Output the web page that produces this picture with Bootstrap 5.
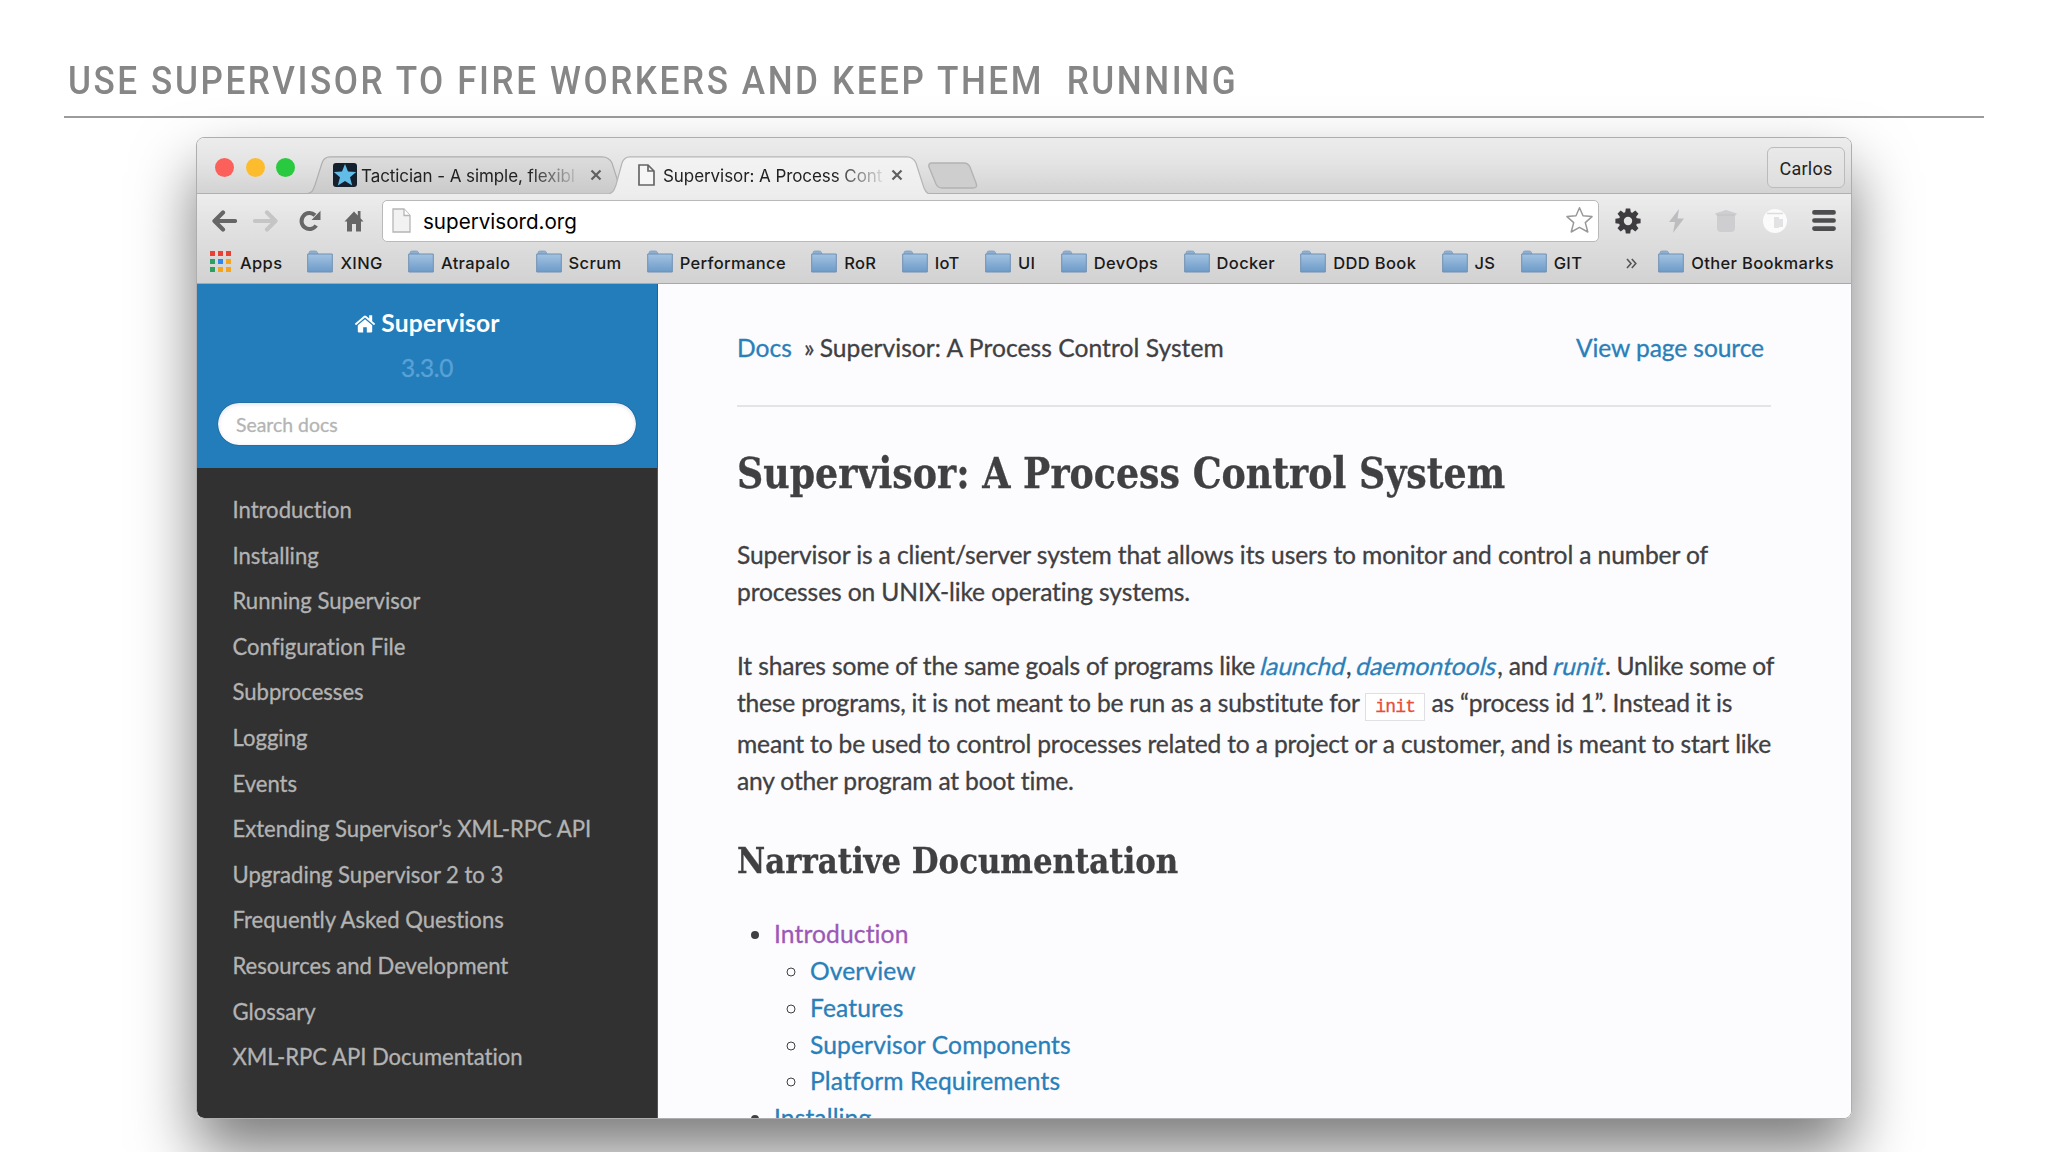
<!DOCTYPE html>
<html lang="en">
<head>
<meta charset="utf-8">
<title>Use Supervisor to fire workers</title>
<link href="https://cdn.jsdelivr.net/npm/bootstrap@5.3.0/dist/css/bootstrap.min.css" rel="stylesheet">
<script src="https://cdn.jsdelivr.net/npm/bootstrap@5.3.0/dist/js/bootstrap.bundle.min.js"></script>
<style>
  body { height: 1152px; background: #fff; }
  .slide { height: 1152px; padding: 58px 64px 0; }
  .slide-title { font: 500 39px/46px Roboto, sans-serif; color: #868686; letter-spacing: 2.86px; white-space: pre; padding-left: 4px; transform: scaleX(.9); transform-origin: 4px 0; height: 58px; }
  .slide-rule { height: 2px; background: #9b9c9c; }
  .browser { width: 1656px; height: 982px; margin: 19px 0 0 132px; border: 1px solid #aeaeae; border-radius: 8px; box-shadow: 0 33px 62px rgba(0,0,0,.52); font-family: Inter, sans-serif; }
  .tabstrip { height: 56px; background: linear-gradient(#ececec, #e4e4e4 45%, #d4d3d4); border-bottom: 1px solid #b1b0b1; padding-left: 18px; }
  .lights { gap: 11.5px; padding-top: 20px; }
  .light { width: 19px; height: 19px; border-radius: 50%; }
  .tab-item { height: 38px; margin-top: 18px; color: #222; font-size: 17px; letter-spacing: -.07px; position: relative; }
  .tab-shape { position: absolute; inset: 0; width: 100%; height: 100%; }
  .tab-back { width: 318px; margin-left: 13px; padding-left: 25px; }
  .tab-front { width: 320px; margin-left: -17px; padding-left: 29px; z-index: 1; }
  .tab-label { width: 215px; padding-top: 3px; white-space: nowrap; overflow: hidden; position: relative; -webkit-mask-image: linear-gradient(90deg, #000 78%, rgba(0,0,0,.12)); mask-image: linear-gradient(90deg, #000 78%, rgba(0,0,0,.12)); }
  .tab-item svg { flex: none; }
  .new-tab { margin: 24px 0 0 -1px; }
  .profile { width: 78px; height: 41px; margin: 9px 6px 0 0; padding-top: 3px; border: 1.5px solid #bbb; border-radius: 6px; font: 400 18px/1 Roboto, sans-serif; color: #222; letter-spacing: .24px; background: linear-gradient(#e9e9e9, #dedede); }
  .chrome-bars { height: 90px; background: linear-gradient(#ededed, #e3e2e3 35%, #d2d2d2); border-bottom: 1.5px solid #a9a8a9; }
  .toolbar { height: 53px; padding: 6px 15px 6px 14px; }
  .url-box { height: 42px; width: 1217px; background: #fff; border: 1.5px solid #bab9ba; border-radius: 5px; font-size: 20.6px; color: #000; padding: 3px 4px 0 9px; }
  .bookmarks { height: 32px; padding: 0 17px 0 13px; font-weight: 500; font-size: 16.5px; letter-spacing: .35px; color: #1a1a1a; white-space: nowrap; }
  .bm { gap: 7px; }
  .bm svg { margin-top: -3px; }
  .bm-list { width: 1275px; margin-left: 27px; }
  .page-area { height: 834px; font-family: Lato, sans-serif; border-radius: 0 0 7px 7px; -webkit-text-stroke: .3px; }
  .side { width: 461px; background: #313131; border-right: 1px solid #555; }
  .side-head { height: 184px; background: #237dba; padding: 19px 20px 0; }
  .side-name { font-size: 24.6px; line-height: 40px; font-weight: 700; letter-spacing: .15px; gap: 5px; -webkit-text-stroke: 0; }
  .side-version { font-size: 24.4px; line-height: 37px; color: #59a1d6; letter-spacing: -.4px; margin-top: 6px; }
  .side-search { height: 44px; margin-top: 16px; font-size: 19.4px; border: 1px solid #2571a4; border-radius: 22px; padding: 0 18px; box-shadow: inset 0 1px 4px #dde; }
  .side-search::placeholder { color: #b4b4b4; }
  .side-menu { padding: 19px 0 0 35.5px; font-size: 22.1px; line-height: 45.6px; font-variant-ligatures: none; letter-spacing: -.02px; color: #b3b3b3; }
  .doc { min-width: 0; background: #fcfbfe; padding: 46px 80px 0 79px; font-size: 24.6px; line-height: 36.9px; color: #404042; letter-spacing: -.12px; }
  .doc a { color: #2980b9; text-decoration: none; }
  .doc a.seen { color: #9b59b6; }
  .crumbs { letter-spacing: .05px; padding-right: 7px; }
  .crumb-sep { margin: 0 5px 0 12px; }
  .doc-rule { height: 2px; background: #e3e4e7; margin: 38px 0 45px; }
  .doc h1, .doc h2 { font-family: "DejaVu Serif Condensed", "DejaVu Serif", serif; font-stretch: condensed; font-weight: 700; letter-spacing: 0; white-space: nowrap; transform-origin: 0 0; }
  .doc h1 { font-size: 42px; line-height: 43px; margin: 0 0 42px; transform: scaleX(.962); }
  .doc h2 { font-size: 36px; line-height: 37px; margin: 42px 0 37px; transform: scaleX(.952); }
  .doc p { margin: 0 0 36.9px; white-space: nowrap; }
  .doc p.goals { letter-spacing: -.166px; }
  .goals em { display: inline-block; font-style: normal; transform: skewX(-14deg); letter-spacing: 0; }
  .goals-first { letter-spacing: -.22px; }
  .tight { letter-spacing: -.22px; }
  .init-code { display: inline-block; font: 400 18px/26px "Liberation Mono", monospace; letter-spacing: -.8px; color: #e74c3c; background: #fff; border: 1px solid #dfe0e4; padding: 0 9px; margin-bottom: 5.5px; }
  .doc ul { padding-left: 37px; margin: 0; letter-spacing: .12px; }
  .doc ul ul { padding-left: 36px; }
</style>
</head>
<body class="overflow-hidden">
<svg width="0" height="0" class="position-absolute">
  <defs>
    <linearGradient id="fold" x1="0" y1="0" x2="0" y2="1"><stop offset="0" stop-color="#a3c3e2"/><stop offset="1" stop-color="#6d9ac8"/></linearGradient>
    <linearGradient id="tabBack" x1="0" y1="0" x2="0" y2="1"><stop offset="0" stop-color="#dcdcdc"/><stop offset="1" stop-color="#cbcacb"/></linearGradient>
    <linearGradient id="tabFront" x1="0" y1="0" x2="0" y2="1"><stop offset="0" stop-color="#f3f3f3"/><stop offset="1" stop-color="#ededed"/></linearGradient>
    <symbol id="folder" viewBox="0 0 26 23"><path d="M2 4.5V3Q2 1 4 1H8.5Q10 1 10.5 2.5L11 4.5Z" fill="#8fb0d2" stroke="#7f9fc0" stroke-width=".8"/><path d="M.7 4H25.3V22H.7Z" fill="url(#fold)" stroke="#7090b3" stroke-width="1"/></symbol>
    <symbol id="cross" viewBox="0 0 12 12"><path d="M1.5 1.5L10.5 10.5M10.5 1.5L1.5 10.5" stroke="#606060" stroke-width="2.2"/></symbol>
  </defs>
</svg>
<main class="slide">
  <div class="slide-title">USE SUPERVISOR TO FIRE WORKERS AND KEEP THEM  RUNNING</div>
  <div class="slide-rule"></div>

  <section class="browser d-flex flex-column overflow-hidden">
    <div class="tabstrip d-flex align-items-start flex-shrink-0">
      <div class="lights d-flex">
        <span class="light" style="background:#fc605b"></span>
        <span class="light" style="background:#fdbc2e"></span>
        <span class="light" style="background:#29c940"></span>
      </div>
      <div class="tab-item tab-back d-flex align-items-center">
        <svg class="tab-shape" viewBox="0 0 318 38" preserveAspectRatio="none"><path d="M0 37.5C5 36 5 34 7 29L14 7Q16 .8 22 .8H294Q301 .8 304 7L311 29Q313 36 318 37.5" fill="url(#tabBack)" stroke="#afafaf" stroke-width="1.2"/></svg>
        <svg class="position-relative" width="24" height="24" viewBox="0 0 24 24"><rect width="24" height="24" rx="3" fill="#15202f"/><path d="M12 1L15 8.6L23.2 9L17 14.3L19.2 22.5L12 18L4.8 22.5L7 14.3L.8 9L9 8.6Z" fill="#62bce8"/></svg>
        <div class="tab-label ms-1">Tactician - A simple, flexibl</div>
        <svg class="position-relative" style="margin-left:14px" width="12" height="12"><use href="#cross"/></svg>
      </div>
      <div class="tab-item tab-front d-flex align-items-center">
        <svg class="tab-shape" viewBox="0 0 320 38" preserveAspectRatio="none"><path d="M0 38C5 36 5 34 7 29L13 7Q15 .8 21 .8H298Q304 .8 307 7L314 29Q316 36 320 38" fill="url(#tabFront)" stroke="#b5b5b5" stroke-width="1.2"/></svg>
        <svg class="position-relative" width="17" height="22" viewBox="0 0 17 22"><path d="M1 1H10L16 7V21H1ZM10 1V7H16" fill="#f6f6f6" stroke="#666" stroke-width="1.7"/></svg>
        <div class="tab-label ms-2" style="width:219px">Supervisor: A Process Cont</div>
        <svg class="position-relative" style="margin-left:9px" width="12" height="12"><use href="#cross"/></svg>
      </div>
      <svg class="new-tab" width="50" height="27" viewBox="0 0 50 27"><path d="M4 1H36Q40 1 42 5L48 21Q50 26 45 26H14Q10 26 8 22L1 5Q0 1 4 1Z" fill="#cfcecf" stroke="#b3b3b3" stroke-width="1.4"/></svg>
      <div class="profile ms-auto d-flex align-items-center justify-content-center">Carlos</div>
    </div>

    <div class="chrome-bars flex-shrink-0">
      <div class="toolbar d-flex align-items-center">
        <svg width="26" height="22" viewBox="0 0 26 22"><path d="M24 11H5M12 2.5L3.5 11L12 19.5" fill="none" stroke="#666" stroke-width="4.2" stroke-linecap="round" stroke-linejoin="round"/></svg>
        <svg class="ms-3" width="26" height="22" viewBox="0 0 26 22"><path d="M2 11H21M14 2.5L22.5 11L14 19.5" fill="none" stroke="#c6c5c6" stroke-width="4.2" stroke-linecap="round" stroke-linejoin="round"/></svg>
        <svg style="margin-left:20px" width="23" height="22" viewBox="0 0 23 22"><path d="M17.2 15.5A8 8 0 1 1 16 5.2" fill="none" stroke="#666" stroke-width="4"/><path d="M21.5 .8V10H12.5Z" fill="#666"/></svg>
        <svg style="margin-left:21px" width="22" height="22" viewBox="0 0 22 22"><path d="M11 1.5L1.5 11.5H4V21.5H9V14H13V21.5H18V11.5H20.5L17.5 8.3V1H14.8V5.5Z" fill="#666"/></svg>
        <div class="url-box d-flex align-items-center" style="margin-left:17px">
          <svg class="mb-1" width="20" height="25" viewBox="0 0 20 25"><path d="M1 1H12L18 7.5V24H1Z" fill="#f2f2f2" stroke="#b5b5b5" stroke-width="1.3"/><path d="M12 1V7.5H18" fill="#fff" stroke="#b5b5b5" stroke-width="1.3"/></svg>
          <span style="margin-left:11px">supervisord.org</span>
          <svg class="ms-auto mb-1" width="29" height="28" viewBox="0 0 29 28"><path d="M14.5 1.8L18 9.8L27 10.6L20.3 16.6L22.8 26L14.5 21.3L6.2 26L8.7 16.6L2 10.6L11 9.8Z" fill="#fff" stroke="#999" stroke-width="1.5" stroke-linejoin="round"/></svg>
        </div>
        <svg class="ms-3" width="26" height="26" viewBox="-13 -13 26 26"><g fill="#3e3c3f"><path id="cog" d="M-2.2 -12.6H2.2L3.2 -6H-3.2Z"/><use href="#cog" transform="rotate(45)"/><use href="#cog" transform="rotate(90)"/><use href="#cog" transform="rotate(135)"/><use href="#cog" transform="rotate(180)"/><use href="#cog" transform="rotate(225)"/><use href="#cog" transform="rotate(270)"/><use href="#cog" transform="rotate(315)"/></g><circle r="6.7" fill="none" stroke="#3e3c3f" stroke-width="5"/></svg>
        <svg style="margin-left:27px" width="17" height="24" viewBox="0 0 17 24"><path d="M11 0L1 13H7L5 24L16 9.5H9.5Z" fill="#bdbcbe"/></svg>
        <svg style="margin-left:29px" width="24" height="26" viewBox="0 0 24 26"><path d="M12 2L23 5.5L21 8V20Q21 24 17 24H7Q3 24 3 20V8L1 5.5Z" fill="#cecdcf"/><path d="M3 7H21" stroke="#c6c5c7" stroke-width="1.4"/></svg>
        <svg style="margin-left:24px" width="26" height="26" viewBox="0 0 26 26"><circle cx="13" cy="13" r="12" fill="#fbfbfb"/><path d="M5 5.5H21" stroke="#dddcde" stroke-width="1.4"/><path d="M12 9H17V11H21V19H17V20H12Z" fill="#e2e1e3"/></svg>
        <svg class="ms-auto" width="24" height="21" viewBox="0 0 24 21"><path d="M2.4 2.4H21.6M2.4 10.5H21.6M2.4 18.6H21.6" stroke="#4e4c4f" stroke-width="4.6" stroke-linecap="round"/></svg>
      </div>
      <div class="bookmarks d-flex align-items-center">
        <span class="d-flex align-items-center bm">
          <svg width="21" height="21" viewBox="0 0 21 21"><g fill="#e94235"><path d="M0 0h5v5H0zM8 0h5v5H8zM16 0h5v5h-5z"/></g><g fill="#2f9e62"><path d="M0 8h5v5H0zM0 16h5v5H0z"/></g><path d="M8 8h5v5H8z" fill="#2f86ee"/><g fill="#f5a41d"><path d="M16 8h5v5h-5zM8 16h5v5H8zM16 16h5v5h-5z"/></g></svg>
          <span class="pe-1 me-n1" style="margin-left:2px">Apps</span>
        </span>
        <div class="bm-list d-flex justify-content-between" style="margin-left:21px">
          <span class="bm d-flex align-items-center"><svg width="26" height="23"><use href="#folder"/></svg>XING</span>
          <span class="bm d-flex align-items-center"><svg width="26" height="23"><use href="#folder"/></svg>Atrapalo</span>
          <span class="bm d-flex align-items-center"><svg width="26" height="23"><use href="#folder"/></svg>Scrum</span>
          <span class="bm d-flex align-items-center"><svg width="26" height="23"><use href="#folder"/></svg>Performance</span>
          <span class="bm d-flex align-items-center"><svg width="26" height="23"><use href="#folder"/></svg>RoR</span>
          <span class="bm d-flex align-items-center"><svg width="26" height="23"><use href="#folder"/></svg>IoT</span>
          <span class="bm d-flex align-items-center"><svg width="26" height="23"><use href="#folder"/></svg>UI</span>
          <span class="bm d-flex align-items-center"><svg width="26" height="23"><use href="#folder"/></svg>DevOps</span>
          <span class="bm d-flex align-items-center"><svg width="26" height="23"><use href="#folder"/></svg>Docker</span>
          <span class="bm d-flex align-items-center"><svg width="26" height="23"><use href="#folder"/></svg>DDD Book</span>
          <span class="bm d-flex align-items-center"><svg width="26" height="23"><use href="#folder"/></svg>JS</span>
          <span class="bm d-flex align-items-center"><svg width="26" height="23"><use href="#folder"/></svg>GIT</span>
        </div>
        <svg style="margin-left:44px" width="11" height="11" viewBox="0 0 11 11"><path d="M1 1L5 5.5L1 10M5.8 1L9.8 5.5L5.8 10" fill="none" stroke="#555" stroke-width="1.6"/></svg>
        <span class="bm d-flex align-items-center ms-auto"><svg width="26" height="23"><use href="#folder"/></svg>Other Bookmarks</span>
      </div>
    </div>

    <div class="page-area d-flex overflow-hidden">
      <aside class="side flex-shrink-0">
        <div class="side-head text-center">
          <div class="side-name d-flex justify-content-center align-items-center text-white">
            <svg width="22" height="19" viewBox="0 0 22 19"><path d="M11 1L.8 9.8L2 11.2L11 3.6L20 11.2L21.2 9.8L18.2 7.2V1.2H15.2V4.6L12.2 2Q11 .9 9.8 2Z" fill="#fff"/><path d="M11 5.2L3.8 11.2V17.5Q3.8 18.6 5 18.6H9.2V13.2H12.8V18.6H17Q18.2 18.6 18.2 17.5V11.2Z" fill="#fff"/></svg>
            Supervisor
          </div>
          <div class="side-version">3.3.0</div>
          <input class="side-search form-control" placeholder="Search docs">
        </div>
        <ul class="side-menu list-unstyled mb-0">
          <li>Introduction</li><li>Installing</li><li>Running Supervisor</li><li>Configuration File</li><li>Subprocesses</li><li>Logging</li><li>Events</li><li>Extending Supervisor’s XML-RPC API</li><li>Upgrading Supervisor 2 to 3</li><li>Frequently Asked Questions</li><li>Resources and Development</li><li>Glossary</li><li>XML-RPC API Documentation</li>
        </ul>
      </aside>
      <article class="doc flex-grow-1">
        <div class="crumbs d-flex justify-content-between">
          <div><a href="#">Docs</a><span class="crumb-sep">»</span>Supervisor: A Process Control System</div>
          <a href="#" style="letter-spacing:-.1px">View page source</a>
        </div>
        <div class="doc-rule"></div>
        <h1>Supervisor: A Process Control System</h1>
        <p>Supervisor is a client/server system that allows its users to monitor and control a number of<br>processes on UNIX-like operating systems.</p>
        <p class="goals mb-0">It shares some of the same goals of programs like <span class="goals-first"><a href="#"><em>launchd</em></a>, <a href="#"><em>daemontools</em></a>, and <a href="#"><em>runit</em></a>. Unlike some of</span><br><span class="tight">these programs, it is not meant to be run as a substitute for <span class="init-code">init</span> as “process id 1”. Instead it is</span><br>meant to be used to control processes related to a project or a customer, and is meant to start like<br>any other program at boot time.</p>
        <h2>Narrative Documentation</h2>
        <ul>
          <li><a href="#" class="seen">Introduction</a>
            <ul>
              <li><a href="#">Overview</a></li>
              <li><a href="#">Features</a></li>
              <li><a href="#">Supervisor Components</a></li>
              <li><a href="#">Platform Requirements</a></li>
            </ul>
          </li>
          <li><a href="#">Installing</a></li>
        </ul>
      </article>
    </div>
  </section>
</main>
</body>
</html>
